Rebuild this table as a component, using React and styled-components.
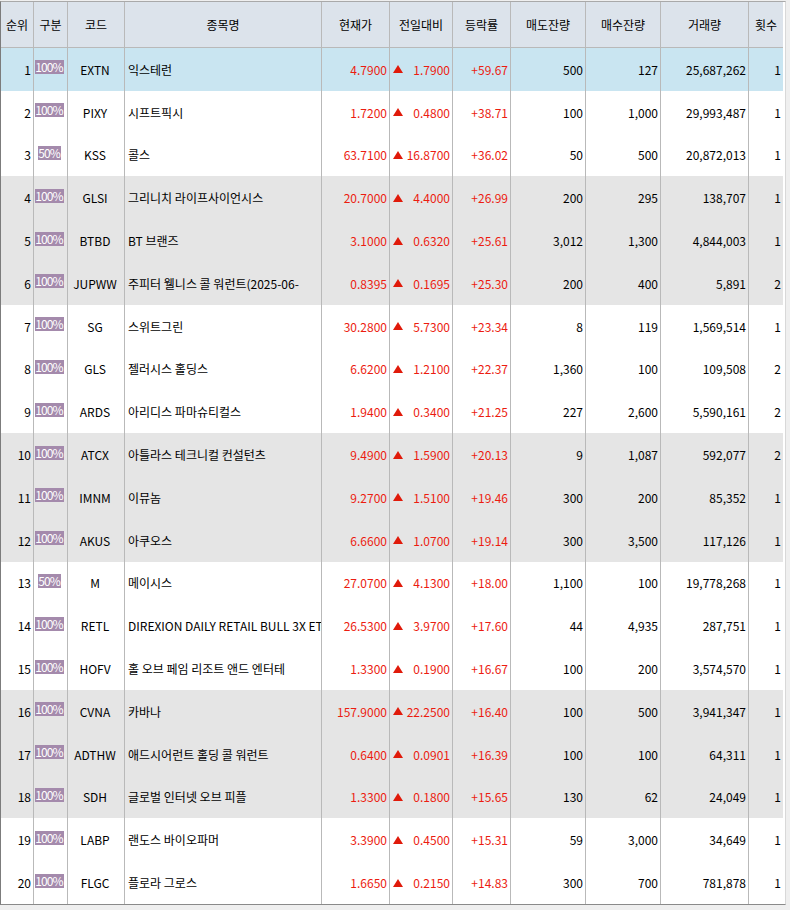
import React from "react";
import styled, { createGlobalStyle } from "styled-components";

const Global = createGlobalStyle`
  html, body { margin: 0; padding: 0; background: #ffffff; }
  body { font-family: "Noto Sans CJK KR", "Noto Sans", sans-serif; font-size: 12px; color: #000; }
`;

const COLS = "32px 34px 57px 197px 68px 63px 58px 75px 75px 88px 35px";

const Page = styled.div`
  width: 790px;
  height: 910px;
  padding-top: 1px;
  box-sizing: border-box;
  background: #efefef;
  display: flex;
  overflow: hidden;
`;

const Frame = styled.div`
  width: 786px;
  height: 904px;
  box-sizing: border-box;
  background: #ffffff;
  border-left: 1px solid #7c7c7c;
  border-top: 1px solid #a9a9a9;
  border-bottom: 1px solid #8a8a8a;
  border-right: 1px solid #d8d8d8;
  display: flex;
  flex-direction: column;
`;

const HeaderRow = styled.div`
  display: grid;
  grid-template-columns: ${COLS};
  height: 46px;
  box-sizing: border-box;
  background: #dce3eb;
  border-bottom: 1px solid #b9b9b9;
  width: 782px;
`;

const HeadCell = styled.div`
  display: flex;
  align-items: center;
  justify-content: center;
  border-left: ${(p) => (p.$first ? "none" : "1px solid #b9b9b9")};
  font-size: 12px;
  white-space: nowrap;
  overflow: hidden;
`;

const Body = styled.div`
  display: grid;
  grid-template-rows: repeat(20, 1fr);
  flex: 1;
  width: 782px;
`;

const Row = styled.div`
  display: grid;
  grid-template-columns: ${COLS};
  background: ${(p) => (p.$tone === "sel" ? "#c9e5f1" : p.$tone === "gray" ? "#e5e5e5" : "#ffffff")};
`;

const Cell = styled.div`
  display: flex;
  align-items: center;
  justify-content: ${(p) => (p.$align === "left" ? "flex-start" : p.$align === "center" ? "center" : "flex-end")};
  padding: 0 ${(p) => (p.$align === "left" ? "0 0 3px" : "2px 0 0")};
  border-left: ${(p) => (p.$first ? "none" : "1px solid #b9b9b9")};
  color: ${(p) => (p.$red ? "#ec1c10" : "#000")};
  white-space: nowrap;
  overflow: hidden;
  font-size: 12px;
  min-width: 0;
`;

const ChangeCell = styled(Cell)`
  justify-content: space-between;
  padding-left: 3px;
`;

const Badge = styled.span`
  display: inline-flex;
  align-items: center;
  justify-content: center;
  height: 14px;
  padding: 0 1px 0 0;
  box-sizing: border-box;
  background: #a48aac;
  color: #ffffff;
  font-size: 12px;
  letter-spacing: -0.9px;
  line-height: 14px;
  transform: translateY(-2px);
`;

const Tri = styled.svg`
  width: 10px;
  height: 8px;
  flex: none;
`;

const headers = ["순위", "구분", "코드", "종목명", "현재가", "전일대비", "등락률", "매도잔량", "매수잔량", "거래량", "횟수"];

const rows = [
  ["100%", "EXTN", "익스테런", "4.7900", "1.7900", "+59.67", "500", "127", "25,687,262", "1"],
  ["100%", "PIXY", "시프트픽시", "1.7200", "0.4800", "+38.71", "100", "1,000", "29,993,487", "1"],
  ["50%", "KSS", "콜스", "63.7100", "16.8700", "+36.02", "50", "500", "20,872,013", "1"],
  ["100%", "GLSI", "그리니치 라이프사이언시스", "20.7000", "4.4000", "+26.99", "200", "295", "138,707", "1"],
  ["100%", "BTBD", "BT 브랜즈", "3.1000", "0.6320", "+25.61", "3,012", "1,300", "4,844,003", "1"],
  ["100%", "JUPWW", "주피터 웰니스 콜 워런트(2025-06-", "0.8395", "0.1695", "+25.30", "200", "400", "5,891", "2"],
  ["100%", "SG", "스위트그린", "30.2800", "5.7300", "+23.34", "8", "119", "1,569,514", "1"],
  ["100%", "GLS", "젤러시스 홀딩스", "6.6200", "1.2100", "+22.37", "1,360", "100", "109,508", "2"],
  ["100%", "ARDS", "아리디스 파마슈티컬스", "1.9400", "0.3400", "+21.25", "227", "2,600", "5,590,161", "2"],
  ["100%", "ATCX", "아틀라스 테크니컬 컨설턴츠", "9.4900", "1.5900", "+20.13", "9", "1,087", "592,077", "2"],
  ["100%", "IMNM", "이뮤놈", "9.2700", "1.5100", "+19.46", "300", "200", "85,352", "1"],
  ["100%", "AKUS", "아쿠오스", "6.6600", "1.0700", "+19.14", "300", "3,500", "117,126", "1"],
  ["50%", "M", "메이시스", "27.0700", "4.1300", "+18.00", "1,100", "100", "19,778,268", "1"],
  ["100%", "RETL", "DIREXION DAILY RETAIL BULL 3X ET", "26.5300", "3.9700", "+17.60", "44", "4,935", "287,751", "1"],
  ["100%", "HOFV", "홀 오브 페임 리조트 앤드 엔터테", "1.3300", "0.1900", "+16.67", "100", "200", "3,574,570", "1"],
  ["100%", "CVNA", "카바나", "157.9000", "22.2500", "+16.40", "100", "500", "3,941,347", "1"],
  ["100%", "ADTHW", "애드시어런트 홀딩 콜 워런트", "0.6400", "0.0901", "+16.39", "100", "100", "64,311", "1"],
  ["100%", "SDH", "글로벌 인터넷 오브 피플", "1.3300", "0.1800", "+15.65", "130", "62", "24,049", "1"],
  ["100%", "LABP", "랜도스 바이오파머", "3.3900", "0.4500", "+15.31", "59", "3,000", "34,649", "1"],
  ["100%", "FLGC", "플로라 그로스", "1.6650", "0.2150", "+14.83", "300", "700", "781,878", "1"],
];

function UpTriangle() {
  return (
    <Tri viewBox="0 0 10 8">
      <polygon points="5,0 10,8 0,8" fill="#e01a0a" />
    </Tri>
  );
}

export default function App() {
  return (
    <>
      <Global />
      <Page>
        <Frame>
          <HeaderRow>
            {headers.map((h, i) => (
              <HeadCell key={h} $first={i === 0}>
                {h}
              </HeadCell>
            ))}
          </HeaderRow>
          <Body>
            {rows.map((r, i) => {
              const tone = i === 0 ? "sel" : Math.floor(i / 3) % 2 === 1 ? "gray" : "white";
              return (
                <Row key={i} $tone={tone}>
                  <Cell $first>{i + 1}</Cell>
                  <Cell $align="center">
                    <Badge>{r[0]}</Badge>
                  </Cell>
                  <Cell $align="center">{r[1]}</Cell>
                  <Cell $align="left">{r[2]}</Cell>
                  <Cell $red>{r[3]}</Cell>
                  <ChangeCell $red>
                    <UpTriangle />
                    <span>{r[4]}</span>
                  </ChangeCell>
                  <Cell $red>{r[5]}</Cell>
                  <Cell>{r[6]}</Cell>
                  <Cell>{r[7]}</Cell>
                  <Cell>{r[8]}</Cell>
                  <Cell>{r[9]}</Cell>
                </Row>
              );
            })}
          </Body>
        </Frame>
      </Page>
    </>
  );
}
